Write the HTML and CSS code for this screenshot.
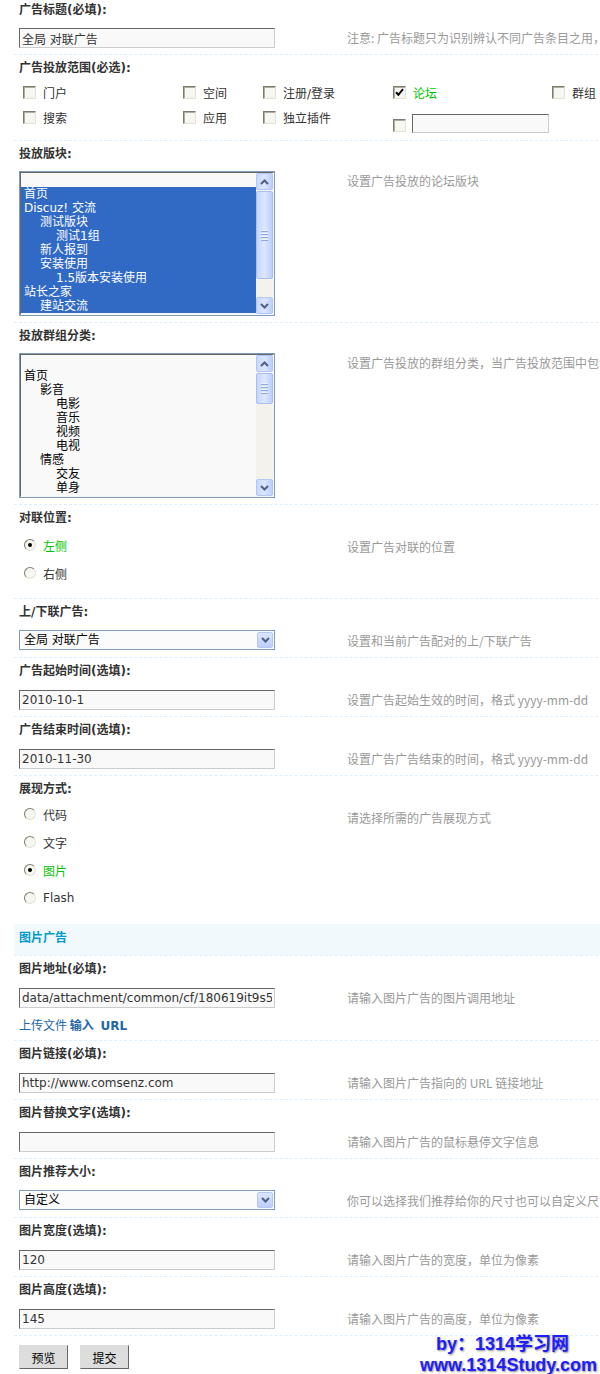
FILE: index.html
```html
<!DOCTYPE html>
<html lang="zh-CN">
<head>
    <meta charset="UTF-8">
    <title>广告设置</title>
    <link rel="stylesheet" href="styles.css">
</head>
<body>
<div class="page">
    <div class="form">

        <div class="sec first">
            <div class="ttl">广告标题(必填):</div>
            <div class="val">
                <div class="cell"><input type="text" class="txt" value="全局 对联广告"></div>
                <div class="tip">注意: 广告标题只为识别辨认不同广告条目之用，并不会在广告中显示</div>
            </div>
        </div>

        <div class="sec">
            <div class="ttl">广告投放范围(必选):</div>
            <div class="checks">
                <div class="ck-item"><span class="ck"></span>门户</div>
                <div class="ck-item"><span class="ck"></span>空间</div>
                <div class="ck-item"><span class="ck"></span>注册/登录</div>
                <div class="ck-item on"><span class="ck"><svg width="9" height="9" viewBox="0 0 9 9"><path d="M1 4.2 L3.4 6.8 L8 1.2" fill="none" stroke="#000" stroke-width="2"/></svg></span>论坛</div>
                <div class="ck-item"><span class="ck"></span>群组</div>
                <div class="ck-item"><span class="ck"></span>搜索</div>
                <div class="ck-item"><span class="ck"></span>应用</div>
                <div class="ck-item"><span class="ck"></span>独立插件</div>
                <div class="ck-item other"><span class="ck"></span><input type="text" class="txt small" value=""></div>
            </div>
        </div>

        <div class="sec">
            <div class="ttl">投放版块:</div>
            <div class="val">
                <div class="cell">
                    <div class="list">
                        <div class="list-in">
                            <div class="opts">
                                <div class="opt"></div>
                                <div class="opt on">首页</div>
                                <div class="opt on">Discuz! 交流</div>
                                <div class="opt on lv2">测试版块</div>
                                <div class="opt on lv3">测试1组</div>
                                <div class="opt on lv2">新人报到</div>
                                <div class="opt on lv2">安装使用</div>
                                <div class="opt on lv3">1.5版本安装使用</div>
                                <div class="opt on">站长之家</div>
                                <div class="opt on lv2">建站交流</div>
                            </div>
                            <div class="sbar">
                                <span class="sbtn"><svg width="9" height="6" viewBox="0 0 9 6"><path d="M1 5 L4.5 1.5 L8 5" fill="none" stroke="#4d6185" stroke-width="2"/></svg></span>
                                <div class="track"><span class="thumb long"><i></i><i></i><i></i><i></i></span></div>
                                <span class="sbtn"><svg width="9" height="6" viewBox="0 0 9 6"><path d="M1 1 L4.5 4.5 L8 1" fill="none" stroke="#4d6185" stroke-width="2"/></svg></span>
                            </div>
                        </div>
                    </div>
                </div>
                <div class="tip tip-list">设置广告投放的论坛版块</div>
            </div>
        </div>

        <div class="sec">
            <div class="ttl">投放群组分类:</div>
            <div class="val">
                <div class="cell">
                    <div class="list">
                        <div class="list-in">
                            <div class="opts">
                                <div class="opt"></div>
                                <div class="opt">首页</div>
                                <div class="opt lv2">影音</div>
                                <div class="opt lv3">电影</div>
                                <div class="opt lv3">音乐</div>
                                <div class="opt lv3">视频</div>
                                <div class="opt lv3">电视</div>
                                <div class="opt lv2">情感</div>
                                <div class="opt lv3">交友</div>
                                <div class="opt lv3">单身</div>
                            </div>
                            <div class="sbar">
                                <span class="sbtn"><svg width="9" height="6" viewBox="0 0 9 6"><path d="M1 5 L4.5 1.5 L8 5" fill="none" stroke="#4d6185" stroke-width="2"/></svg></span>
                                <div class="track"><span class="thumb short"><i></i><i></i><i></i><i></i></span></div>
                                <span class="sbtn"><svg width="9" height="6" viewBox="0 0 9 6"><path d="M1 1 L4.5 4.5 L8 1" fill="none" stroke="#4d6185" stroke-width="2"/></svg></span>
                            </div>
                        </div>
                    </div>
                </div>
                <div class="tip tip-list">设置广告投放的群组分类，当广告投放范围中包含“群组”时有效</div>
            </div>
        </div>

        <div class="sec">
            <div class="ttl">对联位置:</div>
            <div class="val">
                <div class="cell radios">
                    <div class="radio on"><span class="rd"></span>左侧</div>
                    <div class="radio"><span class="rd"></span>右侧</div>
                </div>
                <div class="tip">设置广告对联的位置</div>
            </div>
        </div>

        <div class="sec">
            <div class="ttl">上/下联广告:</div>
            <div class="val">
                <div class="cell">
                    <div class="sel">
                        <span class="sel-text">全局 对联广告</span>
                        <span class="sel-btn"><svg width="9" height="6" viewBox="0 0 9 6"><path d="M1 1 L4.5 4.5 L8 1" fill="none" stroke="#4d6185" stroke-width="2"/></svg></span>
                    </div>
                </div>
                <div class="tip">设置和当前广告配对的上/下联广告</div>
            </div>
        </div>

        <div class="sec">
            <div class="ttl">广告起始时间(选填):</div>
            <div class="val">
                <div class="cell"><input type="text" class="txt" value="2010-10-1"></div>
                <div class="tip">设置广告起始生效的时间，格式 yyyy-mm-dd</div>
            </div>
        </div>

        <div class="sec">
            <div class="ttl">广告结束时间(选填):</div>
            <div class="val">
                <div class="cell"><input type="text" class="txt" value="2010-11-30"></div>
                <div class="tip">设置广告广告结束的时间，格式 yyyy-mm-dd</div>
            </div>
        </div>

        <div class="sec">
            <div class="ttl">展现方式:</div>
            <div class="val">
                <div class="cell radios tight">
                    <div class="radio"><span class="rd"></span>代码</div>
                    <div class="radio"><span class="rd"></span>文字</div>
                    <div class="radio on"><span class="rd"></span>图片</div>
                    <div class="radio"><span class="rd"></span>Flash</div>
                </div>
                <div class="tip">请选择所需的广告展现方式</div>
            </div>
        </div>

        <div class="partition">图片广告</div>

        <div class="sec">
            <div class="ttl">图片地址(必填):</div>
            <div class="val">
                <div class="cell">
                    <input type="text" class="txt" value="data/attachment/common/cf/180619it9s5x9z5ylhq5tr.jpg">
                    <div class="links"><a href="#">上传文件</a> <b><a href="#">输入 <span class="url">URL</span></a></b></div>
                </div>
                <div class="tip">请输入图片广告的图片调用地址</div>
            </div>
        </div>

        <div class="sec">
            <div class="ttl">图片链接(必填):</div>
            <div class="val">
                <div class="cell"><input type="text" class="txt" value="http://www.comsenz.com"></div>
                <div class="tip">请输入图片广告指向的 URL 链接地址</div>
            </div>
        </div>

        <div class="sec">
            <div class="ttl">图片替换文字(选填):</div>
            <div class="val">
                <div class="cell"><input type="text" class="txt" value=""></div>
                <div class="tip">请输入图片广告的鼠标悬停文字信息</div>
            </div>
        </div>

        <div class="sec">
            <div class="ttl">图片推荐大小:</div>
            <div class="val">
                <div class="cell">
                    <div class="sel">
                        <span class="sel-text">自定义</span>
                        <span class="sel-btn"><svg width="9" height="6" viewBox="0 0 9 6"><path d="M1 1 L4.5 4.5 L8 1" fill="none" stroke="#4d6185" stroke-width="2"/></svg></span>
                    </div>
                </div>
                <div class="tip">你可以选择我们推荐给你的尺寸也可以自定义尺寸</div>
            </div>
        </div>

        <div class="sec">
            <div class="ttl">图片宽度(选填):</div>
            <div class="val">
                <div class="cell"><input type="text" class="txt" value="120"></div>
                <div class="tip">请输入图片广告的宽度，单位为像素</div>
            </div>
        </div>

        <div class="sec">
            <div class="ttl">图片高度(选填):</div>
            <div class="val">
                <div class="cell"><input type="text" class="txt" value="145"></div>
                <div class="tip">请输入图片广告的高度，单位为像素</div>
            </div>
        </div>

        <div class="sec buttons">
            <button class="btn">预览</button>
            <button class="btn">提交</button>
        </div>
    </div>

    <div class="mark">
        <div class="mark-1">by：1314学习网</div>
        <div>www.1314Study.com</div>
    </div>
</div>
</body>
</html>
```

FILE: styles.css
```css
body {
    margin: 0;
    background-color: #fff;
    font-family: "DejaVu Sans", "Noto Sans CJK SC", sans-serif;
    font-size: 12px;
    color: #333;
}
.page {
    position: relative;
    width: 600px;
    height: 1374px;
    overflow: hidden;
}
.form {
    margin-left: 14px;
    width: 1000px;
}
.sec {
    border-top: 1px dashed #deeffb;
}
.sec.first {
    border-top: 0;
}
.ttl {
    box-sizing: border-box;
    height: 26px;
    padding: 4px 5px 0;
    line-height: 18px;
    font-weight: bold;
    color: #333;
    overflow: hidden;
}
.first .ttl {
    height: 22px;
    padding-top: 1px;
}
.val {
    display: grid;
    grid-template-columns: 333px auto;
    align-items: start;
    padding-bottom: 6px;
}
.cell {
    padding-left: 5px;
}
.tip {
    height: 21px;
    margin-top: 5px;
    line-height: 21px;
    color: #999;
    font-family: "Noto Sans CJK SC", sans-serif;
    white-space: nowrap;
    overflow: hidden;
}
.tip-list {
    margin-top: 3px;
}

/* text inputs */
.txt {
    display: block;
    box-sizing: border-box;
    width: 256px;
    height: 20px;
    margin: 6px 0 0;
    padding: 0 2px;
    border: 1px solid;
    border-color: #666 #ccc #ccc #666;
    background-color: #f9f9f9;
    font-family: "DejaVu Sans", "Noto Sans CJK SC", sans-serif;
    font-size: 12px;
    color: #333;
    outline: none;
}
.txt.small {
    width: 137px;
    height: 19px;
    margin: 0 0 0 6px;
}

/* checkboxes */
.checks {
    display: grid;
    grid-template-columns: 160px 80px 130px 159px 200px;
    row-gap: 3px;
    align-items: start;
    padding: 0 0 7px 9px;
}
.ck-item {
    display: flex;
    align-items: center;
    height: 22px;
    white-space: nowrap;
}
.ck-item.on {
    color: #00c400;
}
.ck-item.other {
    align-items: flex-end;
    height: 27px;
}
.ck {
    box-sizing: border-box;
    display: flex;
    align-items: center;
    justify-content: center;
    width: 13px;
    height: 13px;
    margin-right: 7px;
    border: 1px solid;
    border-color: #7c7c70 #e2e2d8 #e2e2d8 #7c7c70;
    box-shadow: inset 1px 1px 0 #aeae9f;
    background-color: #f7f7f2;
}
.other .ck {
    margin: 0 0 1px;
}

/* list boxes */
.list {
    box-sizing: border-box;
    width: 256px;
    height: 145px;
    margin-top: 4px;
    border: 1px solid #7f9db9;
}
.list-in {
    box-sizing: border-box;
    display: flex;
    height: 100%;
    border: 1px solid;
    border-color: #666 #f4f4f4 #f4f4f4 #666;
    background-color: #f9f9f9;
}
.opts {
    flex: 1;
    overflow: hidden;
}
.opt {
    height: 14px;
    line-height: 14px;
    padding-left: 3px;
    white-space: nowrap;
    color: #000;
}
.opt.on {
    background-color: #316ac5;
    color: #fff;
}
.opt.lv2 {
    padding-left: 19px;
}
.opt.lv3 {
    padding-left: 35px;
}
.sbar {
    display: flex;
    flex-direction: column;
    width: 17px;
    background-color: #f3f2ec;
}
.sbtn {
    box-sizing: border-box;
    display: flex;
    align-items: center;
    justify-content: center;
    height: 17px;
    border: 1px solid #b4c7f4;
    border-radius: 2px;
    background: linear-gradient(to right, #c9d8fc, #dbe5fd 50%, #bccffa);
}
.track {
    flex: 1;
}
.thumb {
    box-sizing: border-box;
    display: flex;
    flex-direction: column;
    align-items: center;
    justify-content: center;
    gap: 1px;
    margin-top: 1px;
    border: 1px solid #a9bff1;
    border-radius: 2px;
    background: linear-gradient(to right, #c6d6fc, #dce6fe 50%, #bdd0fb);
}
.thumb.long {
    height: 88px;
}
.thumb.short {
    height: 31px;
}
.thumb i {
    display: block;
    width: 7px;
    height: 1px;
    background-color: #eef3fe;
    border-bottom: 1px solid #8ca7e4;
}

/* radios */
.radios {
    padding-left: 5px;
    padding-bottom: 5px;
}
.radios.tight {
    margin-top: -2px;
    padding-bottom: 6px;
}
.radio {
    display: flex;
    align-items: center;
    height: 28px;
    padding-left: 5px;
}
.radio.on {
    color: #00c400;
}
.rd {
    box-sizing: border-box;
    display: flex;
    align-items: center;
    justify-content: center;
    width: 12px;
    height: 12px;
    margin-right: 7px;
    border: 1px solid;
    border-color: #7c7c70 #e2e2d8 #e2e2d8 #7c7c70;
    border-radius: 50%;
    background-color: #f7f7f2;
}
.radio.on .rd::after {
    content: "";
    width: 4px;
    height: 4px;
    border-radius: 50%;
    background-color: #000;
}

/* drop-down */
.sel {
    box-sizing: border-box;
    display: flex;
    align-items: center;
    width: 256px;
    height: 20px;
    margin-top: 5px;
    border: 1px solid #7f9db9;
    background-color: #fbfbfb;
    overflow: hidden;
}
.sel-text {
    flex: 1;
    padding-left: 4px;
    line-height: 18px;
    color: #000;
}
.sel-btn {
    box-sizing: border-box;
    display: flex;
    align-items: center;
    justify-content: center;
    width: 16px;
    height: 16px;
    margin-right: 1px;
    border: 1px solid #b4c7f4;
    border-radius: 2px;
    background: linear-gradient(#dbe5fd, #bccffa);
}

.partition {
    box-sizing: border-box;
    height: 31px;
    padding: 5px 5px 0;
    line-height: 18px;
    background-color: #f2f9fd;
    color: #0099cc;
    font-weight: bold;
}

.links {
    height: 18px;
    margin-top: 8px;
    line-height: 18px;
    font-family: "Noto Sans CJK SC", sans-serif;
    overflow: hidden;
}
.links a {
    color: #2366a8;
    text-decoration: none;
}
.links .url {
    margin-left: 4px;
    font-family: "DejaVu Sans", sans-serif;
}

.buttons {
    display: flex;
    gap: 12px;
    padding: 9px 0 0 5px;
}
.btn {
    box-sizing: border-box;
    width: 49px;
    height: 24px;
    padding: 0;
    border: 1px solid;
    border-color: #ddd #666 #666 #ddd;
    background-color: #ddd;
    font-family: "Noto Sans CJK SC", sans-serif;
    font-size: 12px;
    color: #000;
}

/* watermark over the corner */
.mark {
    position: absolute;
    left: 420px;
    top: 1334px;
    font-family: "Liberation Sans", "Noto Sans CJK SC", sans-serif;
    font-size: 18px;
    font-weight: bold;
    line-height: 21px;
    color: #1d1dff;
    text-shadow: 1px 1px 2px #8a8a8a;
    white-space: nowrap;
}
.mark-1 {
    padding-left: 16px;
}
```
